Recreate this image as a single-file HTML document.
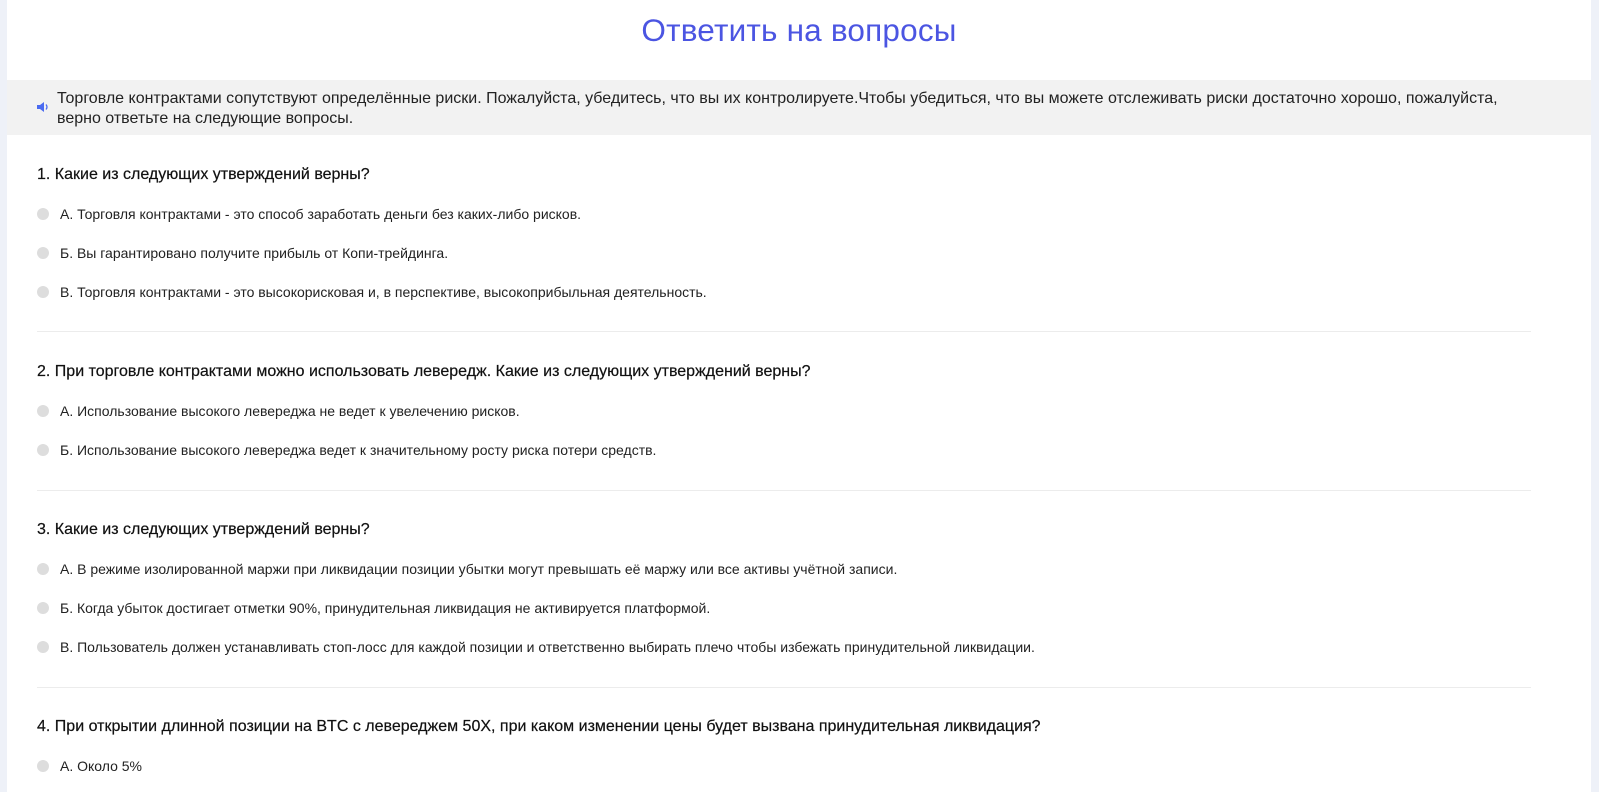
<!DOCTYPE html>
<html><head><meta charset="utf-8"><style>
*{margin:0;padding:0;box-sizing:border-box}
body{width:1599px;height:792px;overflow:hidden;background:#eef1f8;font-family:"Liberation Sans",sans-serif;color:#1a1a1a}
.card{position:absolute;left:7px;top:0;width:1584px;height:792px;background:#fff}
h1{position:absolute;left:0;right:0;top:12px;text-align:center;font-weight:normal;font-size:31.5px;color:#4b55e2;letter-spacing:0.2px}
.ban{position:absolute;left:0;width:1584px;top:80px;height:55px;background:#f2f2f2;padding:9px 78px 0 50px;font-size:16px;line-height:20px;color:#222}
.spk{position:absolute;left:29px;top:20px}
.q{position:absolute;left:30px;font-size:16px;color:#111;-webkit-text-stroke:0.2px #111}
.o{position:absolute;left:53px;font-size:14px;color:#222}
.o:before{content:"";position:absolute;left:-23px;top:2px;width:12px;height:12px;border-radius:50%;background:#ddd}
.hr{position:absolute;left:30px;width:1494px;height:1px;background:#ececec}
</style></head><body><div class="card">
<h1>Ответить на вопросы</h1>
<div class="ban"><svg class="spk" width="14" height="14" viewBox="0 0 14 14"><path d="M1 5h3l4-3v10l-4-3H1z" fill="#4b6bf0"/><path d="M10 4.5q2 2.5 0 5" stroke="#4b6bf0" stroke-width="1.3" fill="none"/></svg>Торговле контрактами сопутствуют определённые риски. Пожалуйста, убедитесь, что вы их контролируете.Чтобы убедиться, что вы можете отслеживать риски достаточно хорошо, пожалуйста, верно ответьте на следующие вопросы.</div>
<div class="q" style="top:166px">1. Какие из следующих утверждений верны?</div>
<div class="o" style="top:206px">А. Торговля контрактами - это способ заработать деньги без каких-либо рисков.</div>
<div class="o" style="top:245px">Б. Вы гарантировано получите прибыль от Копи-трейдинга.</div>
<div class="o" style="top:284px">В. Торговля контрактами - это высокорисковая и, в перспективе, высокоприбыльная деятельность.</div>
<div class="hr" style="top:331px"></div>
<div class="q" style="top:363px">2. При торговле контрактами можно использовать левередж. Какие из следующих утверждений верны?</div>
<div class="o" style="top:403px">А. Использование высокого левереджа не ведет к увелечению рисков.</div>
<div class="o" style="top:442px">Б. Использование высокого левереджа ведет к значительному росту риска потери средств.</div>
<div class="hr" style="top:490px"></div>
<div class="q" style="top:521px">3. Какие из следующих утверждений верны?</div>
<div class="o" style="top:561px">А. В режиме изолированной маржи при ликвидации позиции убытки могут превышать её маржу или все активы учётной записи.</div>
<div class="o" style="top:600px">Б. Когда убыток достигает отметки 90%, принудительная ликвидация не активируется платформой.</div>
<div class="o" style="top:639px">В. Пользователь должен устанавливать стоп-лосс для каждой позиции и ответственно выбирать плечо чтобы избежать принудительной ликвидации.</div>
<div class="hr" style="top:687px"></div>
<div class="q" style="top:718px">4. При открытии длинной позиции на BTC с левереджем 50X, при каком изменении цены будет вызвана принудительная ликвидация?</div>
<div class="o" style="top:758px">А. Около 5%</div>
</div></body></html>
